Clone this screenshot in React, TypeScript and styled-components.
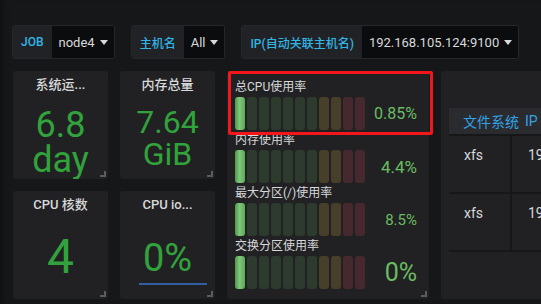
import React from "react";
import styled, { createGlobalStyle } from "styled-components";

const GlobalStyle = createGlobalStyle`
  html, body {
    margin: 0;
    padding: 0;
    background: #161719;
    overflow: hidden;
  }
  body {
    font-family: Roboto, "Noto Sans CJK SC", sans-serif;
    color: #d8d9da;
  }
`;

type Variable = { label: string; value: string };

const variables: Variable[] = [
  { label: "JOB", value: "node4" },
  { label: "主机名", value: "All" },
  { label: "IP(自动关联主机名)", value: "192.168.105.124:9100" },
];

type Gauge = { title: string; value: string; size: number };

const gauges: Gauge[] = [
  { title: "总CPU使用率", value: "0.85%", size: 16 },
  { title: "内存使用率", value: "4.4%", size: 17 },
  { title: "最大分区(/)使用率", value: "8.5%", size: 15 },
  { title: "交换分区使用率", value: "0%", size: 25 },
];

// 11 LCD cells: green, yellow, red zones
const cellZones = ["g", "g", "g", "g", "g", "g", "g", "y", "y", "r", "r"] as const;

const Caret = () => (
  <svg width="8" height="5" viewBox="0 0 8 5">
    <path d="M0 0 L8 0 L4 5 Z" fill="#d8d9da" />
  </svg>
);

const App: React.FC = () => {
  return (
    <>
      <GlobalStyle />
      <Page>
        <VarBar>
          {variables.map((v) => (
            <VarGroup key={v.label}>
              <VarLabel>{v.label}</VarLabel>
              <VarValue>
                {v.value}
                <Caret />
              </VarValue>
            </VarGroup>
          ))}
        </VarBar>

        <Grid>
          <StatPanel>
            <StatTitle>系统运...</StatTitle>
            <StatValue size={36} lh={35} top={9}>
              6.8
              <br />
              day
            </StatValue>
          </StatPanel>

          <StatPanel>
            <StatTitle>内存总量</StatTitle>
            <StatValue size={32} lh={32} top={7}>
              7.64
              <br />
              GiB
            </StatValue>
          </StatPanel>

          <GaugePanel>
            <Highlight />
            {gauges.map((g) => (
              <GaugeRow key={g.title}>
                <GaugeTitle>{g.title}</GaugeTitle>
                <GaugeLine>
                  <Cells>
                    {cellZones.map((z, i) => (
                      <Cell key={i} zone={z} lit={i === 0} />
                    ))}
                  </Cells>
                  <GaugeValue size={g.size}>{g.value}</GaugeValue>
                </GaugeLine>
              </GaugeRow>
            ))}
          </GaugePanel>

          <TablePanel>
            <TableHead>
              <HeadCell>文件系统</HeadCell>
              <HeadCell>IP</HeadCell>
            </TableHead>
            <TableRow>
              <FsCell>xfs</FsCell>
              <IpCell>192.168.105.124:9100</IpCell>
            </TableRow>
            <TableRow>
              <FsCell>xfs</FsCell>
              <IpCell>192.168.105.124:9100</IpCell>
            </TableRow>
          </TablePanel>

          <StatPanel>
            <StatTitle>CPU 核数</StatTitle>
            <StatValue size={48} lh={48} top={14}>
              4
            </StatValue>
          </StatPanel>

          <StatPanel>
            <StatTitle>CPU io...</StatTitle>
            <StatValue size={38} lh={38} top={20}>
              0%
            </StatValue>
            <Sparkline width="68" height="2" viewBox="0 0 68 2">
              <line x1="0" y1="1" x2="68" y2="1" stroke="#2f5f9f" strokeWidth="2" />
            </Sparkline>
          </StatPanel>
        </Grid>
      </Page>
    </>
  );
};

export default App;

// Styled Components

const Page = styled.div`
  width: 541px;
  height: 304px;
  overflow: hidden;
  box-shadow: inset 6px 0 6px -4px rgba(0, 0, 0, 0.35);
`;

const VarBar = styled.div`
  display: flex;
  gap: 16px;
  padding: 25px 0 0 12px;
`;

const VarGroup = styled.div`
  display: flex;
  height: 34px;
  box-sizing: border-box;
  border: 1px solid #26272b;
  border-radius: 3px;
  overflow: hidden;
`;

const VarLabel = styled.div`
  display: flex;
  align-items: center;
  padding: 0 8px;
  background: #202226;
  color: #33b5e5;
  font-size: 12px;
  font-weight: 500;
`;

const VarValue = styled.div`
  display: flex;
  align-items: center;
  gap: 5px;
  padding: 0 6px 0 7px;
  background: #0b0c0e;
  color: #d8d9da;
  font-size: 13px;
`;

const Grid = styled.div`
  display: grid;
  grid-template-columns: 95px 95px 202px 200px;
  grid-template-rows: 108px 108px;
  column-gap: 12px;
  row-gap: 12px;
  margin: 12px 0 0 13px;

  & > :nth-child(3),
  & > :nth-child(4) {
    grid-row: span 2;
  }
`;

const Panel = styled.div`
  position: relative;
  background: #212124;
  border-radius: 3px;
  overflow: hidden;

  &::after {
    content: "";
    position: absolute;
    right: 2px;
    bottom: 2px;
    width: 4px;
    height: 4px;
    border-right: 2px solid #5b5c60;
    border-bottom: 2px solid #5b5c60;
  }
`;

const StatPanel = styled(Panel)`
  display: flex;
  flex-direction: column;
  align-items: center;
`;

const StatTitle = styled.div`
  height: 28px;
  line-height: 28px;
  font-size: 13px;
  font-weight: 500;
  color: #d8d9da;
`;

const StatValue = styled.div<{ size: number; lh: number; top: number }>`
  margin-top: ${(p) => p.top}px;
  font-size: ${(p) => p.size}px;
  line-height: ${(p) => p.lh}px;
  color: #32a23c;
  text-align: center;
`;

const Sparkline = styled.svg`
  align-self: flex-start;
  margin: 6px 0 0 19px;
`;

const GaugePanel = styled(Panel)`
  overflow: visible;
  display: flex;
  flex-direction: column;
  gap: 3px;
  padding: 9px 12px 0 8px;
`;

const Highlight = styled.div`
  position: absolute;
  left: 1px;
  top: 0;
  width: 205px;
  height: 64px;
  box-sizing: border-box;
  border: 3px solid #f4161a;
  border-radius: 2px;
`;

const GaugeRow = styled.div`
  display: flex;
  flex-direction: column;
`;

const GaugeTitle = styled.div`
  height: 17px;
  line-height: 15px;
  font-size: 12px;
  color: #d8d9da;
`;

const GaugeLine = styled.div`
  display: flex;
  align-items: center;
  height: 33px;
`;

const Cells = styled.div`
  display: flex;
  gap: 2px;
  height: 100%;
`;

const zoneColors = {
  g: "#2d3b2e",
  y: "#473f29",
  r: "#46292f",
};

const Cell = styled.div<{ zone: "g" | "y" | "r"; lit: boolean }>`
  width: 10px;
  height: 100%;
  border-radius: 3px;
  background: ${(p) =>
    p.lit
      ? "linear-gradient(to right, #4f974c, #7fc779 45%, #5ea85a)"
      : zoneColors[p.zone]};
`;

const GaugeValue = styled.div<{ size: number }>`
  flex: 1;
  text-align: right;
  font-size: ${(p) => p.size}px;
  color: #6abc61;
`;

const TablePanel = styled(Panel)`
  padding: 37px 0 0 8px;
  &::after {
    display: none;
  }
`;

const TableHead = styled.div`
  display: flex;
  gap: 6px;
  height: 26px;
  align-items: center;
  padding-left: 14px;
  background: #2a2b2f;
  border-bottom: 2px solid #161719;
`;

const HeadCell = styled.div`
  font-size: 14px;
  color: #33a2e5;
`;

const TableRow = styled.div`
  display: flex;
  height: 56px;
  border-bottom: 2px solid #161719;
`;

const FsCell = styled.div`
  flex-shrink: 0;
  width: 46px;
  padding: 11px 0 0 15px;
  font-size: 14px;
  color: #d8d9da;
  border-right: 2px solid #161719;
`;

const IpCell = styled.div`
  flex-shrink: 0;
  padding: 11px 0 0 16px;
  font-size: 14px;
  color: #d8d9da;
  white-space: nowrap;
`;
